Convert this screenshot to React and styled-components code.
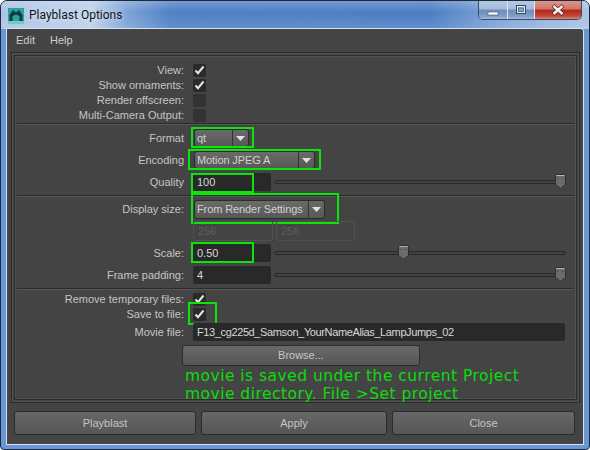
import React from "react";
import styled, { createGlobalStyle } from "styled-components";

const Global = createGlobalStyle`
  html, body { margin: 0; padding: 0; background: #fff; }
  body { width: 590px; height: 450px; overflow: hidden; font-family: "Liberation Sans", Arial, sans-serif; }
`;

const Window = styled.div`
  width: 590px; height: 450px; box-sizing: border-box;
  border: 1px solid #1c2a3c; border-radius: 7px 7px 4px 4px;
  background: #6a96d6;
  display: flex; flex-direction: column; overflow: hidden;
`;
const TitleBar = styled.div`
  height: 28px; flex: none; display: flex; align-items: flex-start;
  padding-left: 7px; box-sizing: border-box;
  background:
    linear-gradient(180deg, rgba(255,255,255,.22), rgba(255,255,255,0) 40%, rgba(255,255,255,.12) 100%),
    linear-gradient(90deg, #a9c4e4 0, #bcd0ea 90px, #7ea3d6 125px, #4f80c6 170px, #4c7ec4 430px, #82a6d8 500px, #a9c3e6 100%);
`;
const Logo = styled.svg`width: 16px; height: 16px; margin-top: 7px; flex: none;`;
const Title = styled.div`
  margin: 4px 0 0 5px; font-family: Roboto, sans-serif; font-size: 12px; line-height: 21px; color: #10151c;
  text-shadow: 0 0 6px rgba(255,255,255,.9);
`;
const Controls = styled.div`
  margin-left: auto; margin-right: 7px; display: flex; height: 20px; margin-top: -1px;
  border: 1px solid #3a4c64; border-top: 0; border-radius: 0 0 5px 5px; overflow: hidden; box-sizing: border-box;
`;
const CtrlButton = styled.div`
  width: ${p => p.$w}px; display: flex; align-items: center; justify-content: center;
  border-left: ${p => p.$first ? "0" : "1px solid #dfe8f4"};
  background: ${p => p.$close
    ? "linear-gradient(180deg,#dd9a8e 0,#d2776a 45%,#b12a1c 55%,#c8483a 85%,#d8877c 100%)"
    : "linear-gradient(180deg,#b7cbe4 0,#a6bdda 45%,#6f8fb8 55%,#7f9fc8 85%,#a4bfe0 100%)"};
`;

const Client = styled.div`
  flex: 1; margin: 0 6px 5px 6px; background: #444; display: flex; flex-direction: column;
  outline: 1px solid #d4e2f4; border-radius: 0 2px 0 0; min-height: 0;
`;
const MenuBar = styled.div`
  height: 23px; flex: none; display: flex; gap: 15px; padding: 1px 0 0 9px; box-sizing: border-box;
  font-size: 11px; line-height: 20px; color: #cfcfcf;
`;
const Frame = styled.div`
  margin: 0 3px 0 4px; height: 351px; flex: none; box-sizing: border-box; padding: 2px;
  border: 1px solid #2a2a2a; box-shadow: inset 0 0 0 1px #525252;
`;
const FrameInner = styled.div`
  height: 100%; box-sizing: border-box; border: 1px solid #2c2c2c; box-shadow: inset 0 0 0 1px #515151;
  padding: 0 2px; display: flex; flex-direction: column;
`;
const Section = styled.div`
  padding-top: ${p => p.$top}px; padding-bottom: ${p => p.$bottom || 0}px;
  border-bottom: ${p => p.$last ? "0" : "1px solid #2b2b2b"};
  box-shadow: ${p => p.$last ? "none" : "0 1px 0 #565656"};
  margin-bottom: ${p => p.$last ? 0 : 1}px;
`;
const Row = styled.div`
  position: relative; display: grid; grid-template-columns: 167px 1fr; column-gap: 9px; align-items: center;
  height: ${p => p.$h}px;
`;
const Label = styled.div`
  text-align: right; font-size: 11px; line-height: 15px; padding-top: 1px; color: #c4c4c4; white-space: nowrap;
`;
const Controls2 = styled.div`
  position: relative; display: flex; align-items: center; height: 100%;
`;
const Check = styled.div`
  width: 13px; height: 13px; border-radius: 2px; background: ${p => p.$on ? "#2a2a2a" : "#323232"};
  display: flex; align-items: center; justify-content: center;
`;
const Drop = styled.div`
  margin-left: 1px; width: ${p => p.$w}px; height: ${p => p.$h || 18}px; box-sizing: border-box; display: flex;
  border: 1px solid #2b2b2b; border-radius: 3px;
  background: linear-gradient(180deg, #6a6a6a, #585858);
  font-size: 11px; color: #d2d2d2; line-height: 16px;
`;
const DropText = styled.div`flex: 1; padding: 0 0 0 2px; white-space: nowrap; letter-spacing: -.1px;`;
const DropArrow = styled.div`
  width: 15px; flex: none; border-left: 1px solid #333; display: flex; align-items: center; justify-content: center;
`;
const Field = styled.div`
  width: ${p => p.$w}px; height: ${p => p.$h || 18}px; box-sizing: border-box; flex: none;
  border-radius: 2px; padding-left: 4px;
  background: ${p => p.$off ? "transparent" : "#292929"};
  border: ${p => p.$off ? "1px solid #505050" : "0"};
  color: ${p => p.$off ? "#5e5e5e" : "#d8d8d8"};
  font-size: 11px; line-height: ${p => p.$off ? 18 : (p.$h || 18)}px; white-space: nowrap;
  letter-spacing: ${p => p.$tight ? "-.38px" : "0"};
`;
const Slider = styled.div`
  position: relative; margin-left: 3px; width: 292px; height: 4px; flex: none; box-sizing: border-box;
  border: 1px solid #2a2a2a; border-radius: 2px; background: #414141;
`;
const Thumb = styled.svg`
  position: absolute; top: -7px; left: ${p => p.$pos}px; width: 11px; height: 15px;
`;
const Pair = styled.div`display: flex; gap: 3px;`;
const Browse = styled.div`
  margin: 2px 0 0 165px; width: 238px; height: 21px; box-sizing: border-box; border: 1px solid #2b2b2b; border-radius: 3px;
  background: linear-gradient(180deg, #696969, #565656);
  text-align: center; font-size: 11px; line-height: 19px; color: #c6c6c6;
`;
const Note = styled.div`
  margin: 1px 0 0 168px; font-family: "DejaVu Sans", sans-serif; font-size: 15.5px; line-height: 18px; color: #0cdc0c;
  white-space: nowrap; letter-spacing: .47px; position: relative;
`;
const Footer = styled.div`
  display: flex; gap: 5px; padding: 8px 7px 0 7px;
`;
const Button = styled.div`
  flex: ${p => p.$w}px 0 0; height: 24px; box-sizing: border-box;
  border: 1px solid #2b2b2b; border-radius: 3px;
  background: linear-gradient(180deg, #676767, #565656);
  text-align: center; font-size: 11px; line-height: 22px; color: #c4c4c4;
`;
const Mark = styled.div`
  position: absolute; box-sizing: border-box; border: 2px solid #0be50b; pointer-events: none;
  left: ${p => p.$l}px; top: ${p => p.$t}px; width: ${p => p.$w}px; height: ${p => p.$h}px;
`;

const Tick = () => (
  <svg width="11" height="10" viewBox="0 0 11 10"><path d="M1.5 5.5 L4 8.2 L9.5 1.5" fill="none" stroke="#e6e6e6" strokeWidth="2" /></svg>
);
const Arrow = () => (
  <svg width="9" height="5" viewBox="0 0 9 5"><path d="M0 0 H9 L4.5 5 Z" fill="#e2e2e2" /></svg>
);
const Knob = ({ pos }) => (
  <Thumb $pos={pos} viewBox="0 0 11 15">
    <path d="M.5 1.5 L1.5 .5 H9.5 L10.5 1.5 V10.5 L5.5 14.5 L.5 10.5 Z" fill="#6c6c6c" stroke="#2e2e2e" />
    <path d="M1.5 1.5 H9.5" stroke="#b4b4b4" />
    <path d="M3 4 v1 M8 4 v1" stroke="#333" />
  </Thumb>
);

const CheckRow = ({ label, on, children }) => (
  <Row $h={15}>
    <Label>{label}</Label>
    <Controls2><Check $on={on}>{on && <Tick />}</Check>{children}</Controls2>
  </Row>
);
const FormRow = ({ label, h = 22, children }) => (
  <Row $h={h}>
    <Label>{label}</Label>
    <Controls2>{children}</Controls2>
  </Row>
);
const Dropdown = ({ w, h, text }) => (
  <Drop $w={w} $h={h}><DropText>{text}</DropText><DropArrow><Arrow /></DropArrow></Drop>
);

export default function App() {
  return (
    <Window>
      <Global />
      <TitleBar>
        <Logo viewBox="0 0 16 16">
          <rect width="16" height="16" fill="#2aa39c" />
          <rect y="13" width="16" height="3" fill="#6ccbc2" />
          <path d="M1.5 13 V7 L5 2 L8 4.5 L11 2 L14.5 7 V13 H11.5 V8 L8 6.5 L4.5 8 V13 Z" fill="#123a44" />
        </Logo>
        <Title>Playblast Options</Title>
        <Controls>
          <CtrlButton $w={28} $first>
            <svg width="12" height="12" viewBox="0 0 12 12"><rect x="1" y="8" width="10" height="3" fill="#fff" stroke="#44536a" strokeWidth=".6" /></svg>
          </CtrlButton>
          <CtrlButton $w={26}>
            <svg width="12" height="12" viewBox="0 0 12 12"><rect x="1.5" y="1.5" width="9" height="8" fill="none" stroke="#34465e" strokeWidth="1" /><rect x="2.5" y="2.5" width="7" height="6" fill="none" stroke="#e8eef6" strokeWidth="1" /><rect x="3.5" y="4" width="5" height="3.5" fill="#8da8c9" stroke="#34465e" strokeWidth=".6" /></svg>
          </CtrlButton>
          <CtrlButton $w={46} $close>
            <svg width="14" height="12" viewBox="0 0 14 12"><path d="M2 1.5 L12 10.5 M12 1.5 L2 10.5" stroke="#5a2a28" strokeWidth="4" /><path d="M2.5 2 L11.5 10 M11.5 2 L2.5 10" stroke="#f4f4f4" strokeWidth="2.4" /></svg>
          </CtrlButton>
        </Controls>
      </TitleBar>
      <Client>
        <MenuBar><span>Edit</span><span>Help</span></MenuBar>
        <Frame>
          <FrameInner>
            <Section $top={6} $bottom={1}>
              <CheckRow label="View:" on />
              <CheckRow label="Show ornaments:" on />
              <CheckRow label="Render offscreen:" />
              <CheckRow label="Multi-Camera Output:" />
            </Section>
            <Section $top={2} $bottom={2}>
              <FormRow label="Format">
                <Dropdown w={55} text="qt" />
                <Mark $l={-2} $t={0} $w={63} $h={21} />
              </FormRow>
              <FormRow label="Encoding">
                <Dropdown w={121} text="Motion JPEG A" />
                <Mark $l={-5} $t={0} $w={133} $h={21} />
              </FormRow>
              <FormRow label="Quality">
                <Field $w={78}>100</Field>
                <Slider><Knob pos={280} /></Slider>
                <Mark $l={-2} $t={2} $w={63} $h={20} />
              </FormRow>
            </Section>
            <Section $top={1} $bottom={2}>
              <FormRow label="Display size:">
                <Dropdown w={131} h={19} text="From Render Settings" />
                <Mark $l={-2} $t={-5} $w={148} $h={31} />
              </FormRow>
              <FormRow label="">
                <Pair><Field $off $w={80} $h={20}>256</Field><Field $off $w={79} $h={20}>256</Field></Pair>
              </FormRow>
              <FormRow label="Scale:">
                <Field $w={78}>0.50</Field>
                <Slider><Knob pos={123} /></Slider>
                <Mark $l={-2} $t={0} $w={63} $h={21} />
              </FormRow>
              <FormRow label="Frame padding:">
                <Field $w={78}>4</Field>
                <Slider><Knob pos={280} /></Slider>
              </FormRow>
            </Section>
            <Section $top={1} $last>
              <CheckRow label="Remove temporary files:" on />
              <CheckRow label="Save to file:" on>
                <Mark $l={-5} $t={-4} $w={29} $h={23} />
              </CheckRow>
              <FormRow label="Movie file:">
                <Field $w={372} $tight>F13_cg225d_Samson_YourNameAlias_LampJumps_02</Field>
              </FormRow>
              <Browse>Browse...</Browse>
              <Note>movie is saved under the current Project<br />movie directory. File &gt;Set project</Note>
            </Section>
          </FrameInner>
        </Frame>
        <Footer>
          <Button $w={182}>Playblast</Button>
          <Button $w={186}>Apply</Button>
          <Button $w={183}>Close</Button>
        </Footer>
      </Client>
    </Window>
  );
}
